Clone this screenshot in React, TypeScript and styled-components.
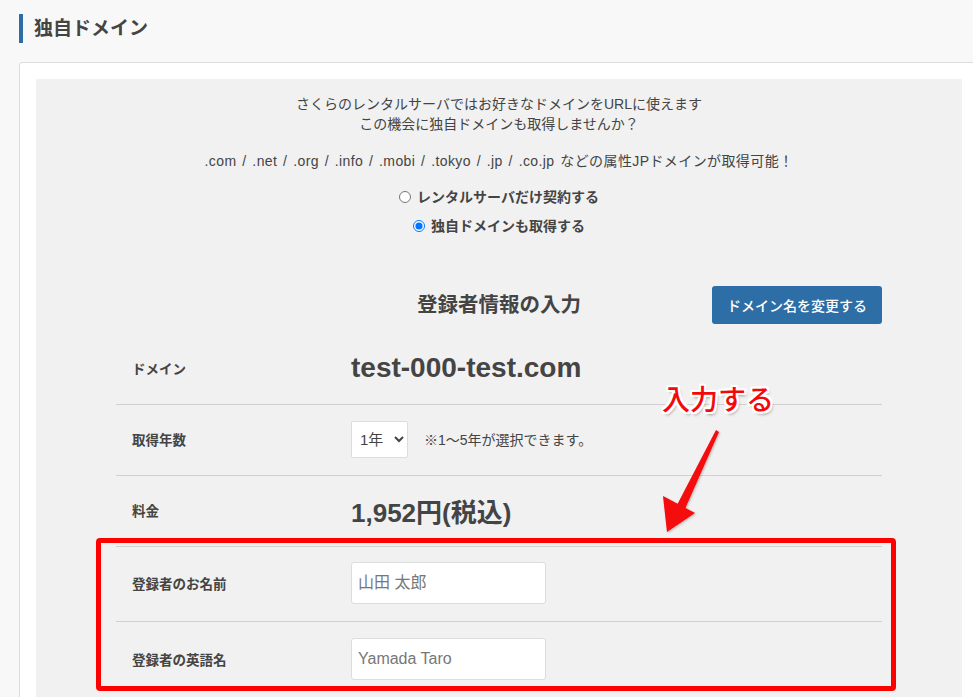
import React from 'react';
import styled, { createGlobalStyle } from 'styled-components';

const GlobalStyle = createGlobalStyle`
  html, body {
    margin: 0;
    padding: 0;
    background: #f8f8f8;
    overflow: hidden;
  }
  body {
    font-family: 'Liberation Sans', 'Noto Sans CJK JP', sans-serif;
    color: #444;
  }
`;

const rows = [
  { label: '登録者のお名前', placeholder: '山田 太郎' },
  { label: '登録者の英語名', placeholder: 'Yamada Taro' },
];

export default function App() {
  return (
    <>
      <GlobalStyle />
      <Page>
        <SectionTitle>独自ドメイン</SectionTitle>
        <Card>
          <Panel>
            <Intro>
              さくらのレンタルサーバではお好きなドメインをURLに使えます
              <br />
              この機会に独自ドメインも取得しませんか？
            </Intro>
            <Tlds>.com / .net / .org / .info / .mobi / .tokyo / .jp / .co.jp などの属性JPドメインが取得可能！</Tlds>
            <RadioGroup>
              <RadioLabel>
                <input type="radio" name="plan" />
                レンタルサーバだけ契約する
              </RadioLabel>
              <RadioLabel>
                <input type="radio" name="plan" defaultChecked />
                独自ドメインも取得する
              </RadioLabel>
            </RadioGroup>

            <FormArea>
              <FormHeader>
                <span />
                <FormTitle>登録者情報の入力</FormTitle>
                <ChangeButton>ドメイン名を変更する</ChangeButton>
              </FormHeader>

              <Table>
                <Row>
                  <Label>ドメイン</Label>
                  <BigValue>test-000-test.com</BigValue>
                </Row>
                <Row>
                  <Label>取得年数</Label>
                  <Value>
                    <YearSelect defaultValue="1">
                      <option value="1">1年</option>
                      <option value="2">2年</option>
                      <option value="3">3年</option>
                      <option value="4">4年</option>
                      <option value="5">5年</option>
                    </YearSelect>
                    <Note>※1〜5年が選択できます。</Note>
                  </Value>
                </Row>
                <Row>
                  <Label>料金</Label>
                  <BigValue $price>1,952円(税込)</BigValue>
                </Row>
                <Highlighted>
                  {rows.map((r, i) => (
                    <Row key={r.label} $tall $last={i === rows.length - 1}>
                      <Label>{r.label}</Label>
                      <Value>
                        <TextInput placeholder={r.placeholder} />
                      </Value>
                    </Row>
                  ))}
                  <RedFrame />
                </Highlighted>
              </Table>

              <Callout>入力する</Callout>
              <Arrow width="80" height="120" viewBox="650 420 80 120">
                <defs>
                  <filter id="sh" x="-20%" y="-20%" width="140%" height="140%">
                    <feDropShadow dx="1" dy="1" stdDeviation="1" floodColor="#000" floodOpacity="0.25" />
                  </filter>
                </defs>
                <g fill="#f5080b" filter="url(#sh)">
                  <polygon points="716,430 719,432 685,509 677,505" />
                  <polygon points="663,496 695,513 667,532" />
                </g>
              </Arrow>
            </FormArea>
          </Panel>
        </Card>
      </Page>
    </>
  );
}

const Page = styled.div`
  padding: 14px 0 0 19px;
`;

const SectionTitle = styled.h2`
  margin: 0;
  height: 29px;
  line-height: 29px;
  border-left: 4px solid #2e6da4;
  padding-left: 11px;
  font-size: 19px;
  font-weight: 700;
  color: #444;
`;

const Card = styled.div`
  margin-top: 19px;
  width: 926px;
  background: #fff;
  border: 1px solid #ddd;
  border-radius: 3px;
  padding: 16px;
`;

const Panel = styled.div`
  background: #f1f1f1;
  border-radius: 2px;
  padding-top: 15px;
  min-height: 640px;
`;

const Intro = styled.p`
  margin: 0;
  text-align: center;
  font-size: 14px;
  line-height: 20px;
`;

const Tlds = styled.p`
  margin: 17px 0 0;
  text-align: center;
  font-size: 14px;
  line-height: 20px;
  word-spacing: 1.5px;
  letter-spacing: 0.4px;
`;

const RadioGroup = styled.div`
  margin-top: 16px;
  display: flex;
  flex-direction: column;
  align-items: center;
  gap: 9px;
`;

const RadioLabel = styled.label`
  display: flex;
  align-items: center;
  gap: 4px;
  font-size: 14px;
  font-weight: 700;
  line-height: 20px;

  input {
    margin: 0 2px 0 0;
    width: 12px;
    height: 12px;
  }
`;

const FormArea = styled.div`
  position: relative;
  margin: 50px 80px 0;
`;

const FormHeader = styled.div`
  display: grid;
  grid-template-columns: 1fr auto 1fr;
  align-items: center;
  margin-bottom: 10px;
`;

const FormTitle = styled.h3`
  margin: 0 0 4px;
  font-size: 20.5px;
  font-weight: 700;
  color: #444;
`;

const ChangeButton = styled.button`
  justify-self: end;
  width: 170px;
  height: 38px;
  border: none;
  border-radius: 3px;
  background: #2c6ea5;
  color: #fff;
  font-family: 'Liberation Sans', 'Noto Sans CJK JP', sans-serif;
  font-size: 14px;
  font-weight: 500;
  cursor: pointer;
`;

const Table = styled.div`
  display: flex;
  flex-direction: column;
`;

const Row = styled.div<{ $tall?: boolean; $last?: boolean }>`
  display: grid;
  grid-template-columns: 235px 1fr;
  align-items: center;
  box-sizing: border-box;
  height: ${(p) => (p.$tall ? '75px' : '71px')};
  padding-bottom: 2px;
  border-bottom: ${(p) => (p.$last ? 'none' : '1px solid #d0d0d0')};
`;

const Label = styled.div`
  padding-left: 16px;
  font-size: 13.5px;
  font-weight: 700;
  color: #444;
`;

const Value = styled.div`
  display: flex;
  align-items: center;
  gap: 16px;
`;

const BigValue = styled.div<{ $price?: boolean }>`
  font-size: ${(p) => (p.$price ? '26px' : '28px')};
  font-weight: 700;
  color: #444;
`;

const YearSelect = styled.select`
  width: 57px;
  height: 37px;
  background: #fff;
  border: 1px solid #ddd;
  border-radius: 2px;
  font-family: 'Liberation Sans', 'Noto Sans CJK JP', sans-serif;
  font-size: 15px;
  color: #444;
  padding: 0 4px;
`;

const Note = styled.span`
  font-size: 14px;
  color: #444;
`;

const TextInput = styled.input`
  box-sizing: border-box;
  width: 195px;
  height: 42px;
  background: #fff;
  border: 1px solid #ddd;
  border-radius: 3px;
  padding: 0 6px;
  font-family: 'Liberation Sans', 'Noto Sans CJK JP', sans-serif;
  font-size: 16px;

  &::placeholder {
    color: #777;
  }
`;

const Highlighted = styled.div`
  position: relative;
`;

const RedFrame = styled.div`
  position: absolute;
  top: -9px;
  left: -20px;
  right: -14px;
  height: 153px;
  border: 5px solid #ff0000;
  border-radius: 4px;
  box-sizing: border-box;
  pointer-events: none;
`;

const Callout = styled.div`
  position: absolute;
  left: 546px;
  top: 98px;
  font-family: 'Noto Sans CJK JP', sans-serif;
  font-size: 28px;
  font-weight: 500;
  line-height: 1;
  color: #f5080b;
  text-shadow:
    2px 0 0 #fff, -2px 0 0 #fff, 0 2px 0 #fff, 0 -2px 0 #fff,
    2px 2px 0 #fff, -2px -2px 0 #fff, 2px -2px 0 #fff, -2px 2px 0 #fff,
    2px 3px 3px rgba(0, 0, 0, 0.35);
`;

const Arrow = styled.svg`
  position: absolute;
  left: 534px;
  top: 134px;
  overflow: visible;
`;
